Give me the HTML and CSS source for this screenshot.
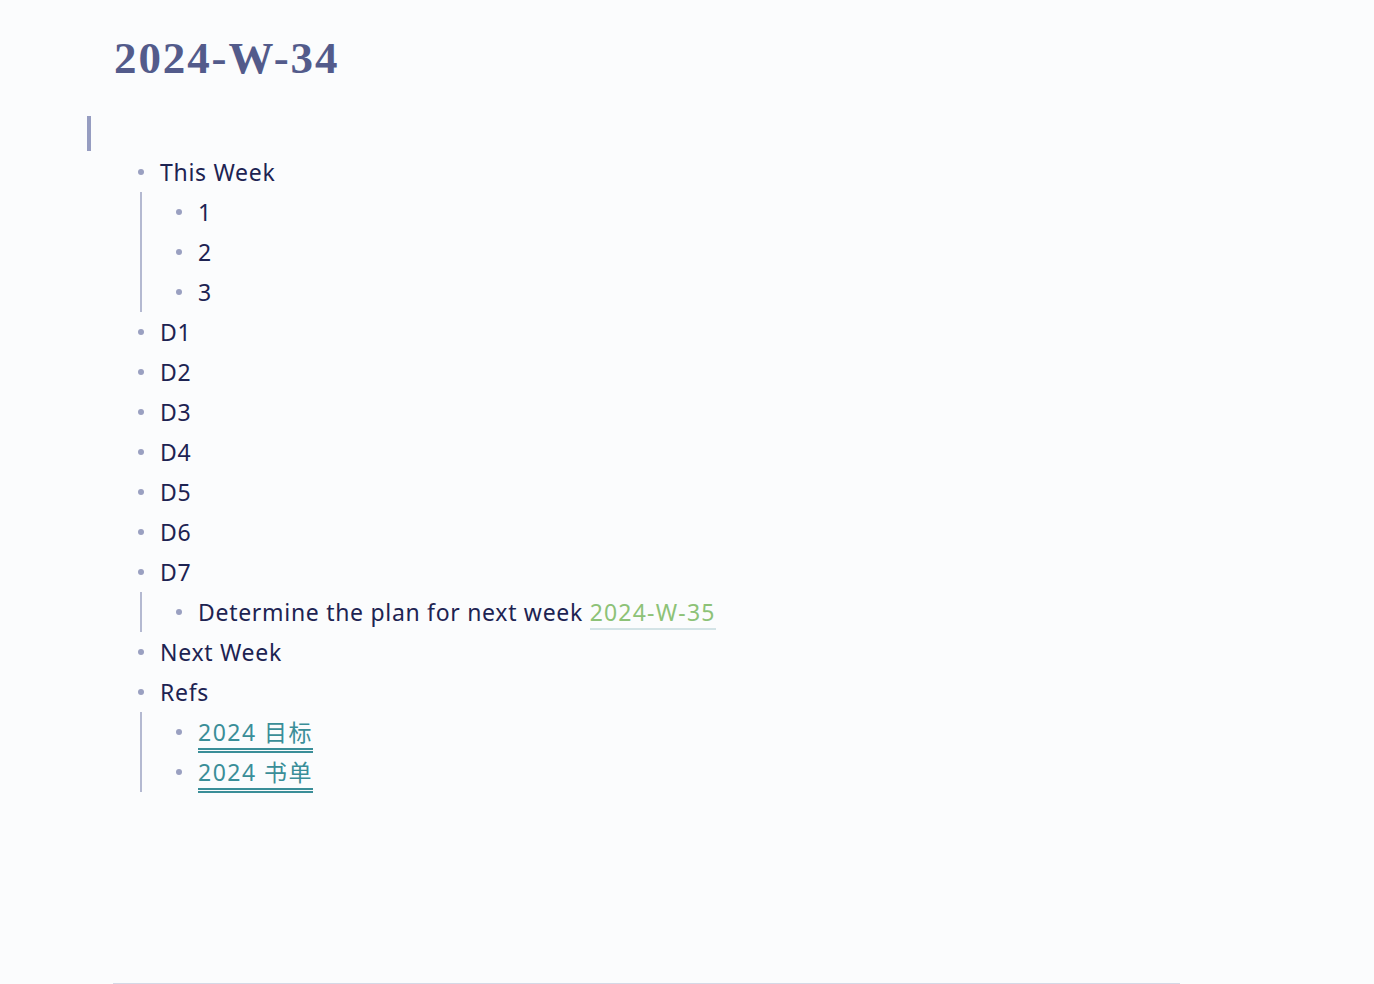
FILE: index.html
```html
<!DOCTYPE html>
<html lang="en">
<head>
<meta charset="utf-8">
<title>2024-W-34</title>
<link rel="stylesheet" href="styles.css">
</head>
<body>
<main class="page">
  <h1 class="title">2024-W-34</h1>
  <div class="empty-block"></div>
  <ul class="outline">
    <li>
      <div class="row"><span class="dot"></span><span class="text">This Week</span></div>
      <ul class="children">
        <li><div class="row"><span class="dot"></span><span class="text">1</span></div></li>
        <li><div class="row"><span class="dot"></span><span class="text">2</span></div></li>
        <li><div class="row"><span class="dot"></span><span class="text">3</span></div></li>
      </ul>
    </li>
    <li><div class="row"><span class="dot"></span><span class="text">D1</span></div></li>
    <li><div class="row"><span class="dot"></span><span class="text">D2</span></div></li>
    <li><div class="row"><span class="dot"></span><span class="text">D3</span></div></li>
    <li><div class="row"><span class="dot"></span><span class="text">D4</span></div></li>
    <li><div class="row"><span class="dot"></span><span class="text">D5</span></div></li>
    <li><div class="row"><span class="dot"></span><span class="text">D6</span></div></li>
    <li>
      <div class="row"><span class="dot"></span><span class="text">D7</span></div>
      <ul class="children">
        <li><div class="row"><span class="dot"></span><span class="text">Determine the plan for next week <a class="page-ref" href="#">2024-W-35</a></span></div></li>
      </ul>
    </li>
    <li><div class="row"><span class="dot"></span><span class="text">Next Week</span></div></li>
    <li>
      <div class="row"><span class="dot"></span><span class="text">Refs</span></div>
      <ul class="children">
        <li><div class="row"><span class="dot"></span><span class="text"><a class="ext-ref" href="#">2024 目标</a></span></div></li>
        <li><div class="row"><span class="dot"></span><span class="text"><a class="ext-ref" href="#">2024 书单</a></span></div></li>
      </ul>
    </li>
  </ul>
  <div class="footer-rule"></div>
</main>
</body>
</html>
```
FILE: styles.css
```css
html, body {
  margin: 0;
  padding: 0;
  background: #fbfcfd;
}
body {
  font-family: "Noto Sans", "Noto Sans CJK SC", sans-serif;
  color: #1d2352;
}
.page {
  min-height: 984px;
  box-sizing: border-box;
  display: flex;
  flex-direction: column;
  padding: 31px 194px 0 113px;
}
.title {
  margin: 0 0 0 1px;
  font-family: "Liberation Serif", serif;
  font-weight: bold;
  font-size: 45px;
  line-height: 54px;
  letter-spacing: 1.9px;
  color: #535b8b;
}
.empty-block {
  margin: 31px 0 0 -26px;
  height: 35px;
  border-left: 4px solid #969dc1;
}
.outline, .children {
  list-style: none;
  margin: 0;
  padding: 0;
}
.outline {
  margin-left: 18px;
  margin-top: 1px;
}
.children {
  margin-left: 9px;
  padding-left: 27px;
  border-left: 2px solid #b4b9d1;
}
.row {
  height: 40px;
  display: flex;
  align-items: center;
}
.dot {
  width: 20px;
  flex: none;
  display: flex;
  justify-content: center;
}
.dot::before {
  content: "";
  width: 6px;
  height: 6px;
  border-radius: 50%;
  background: #9aa0c1;
}
.text {
  margin-left: 9px;
  font-size: 23px;
  line-height: 30px;
  letter-spacing: 0.7px;
  white-space: nowrap;
}
.page-ref {
  color: #8dc277;
  text-decoration: none;
  letter-spacing: 1.2px;
  border-bottom: 2px solid #d3e3e6;
}
.ext-ref {
  color: #3a8e98;
  text-decoration: none;
  letter-spacing: 1.5px;
  border-bottom: 5px double #3a8e98;
}
.footer-rule {
  margin-top: auto;
  height: 1px;
  background: #d5d8e6;
}
```
